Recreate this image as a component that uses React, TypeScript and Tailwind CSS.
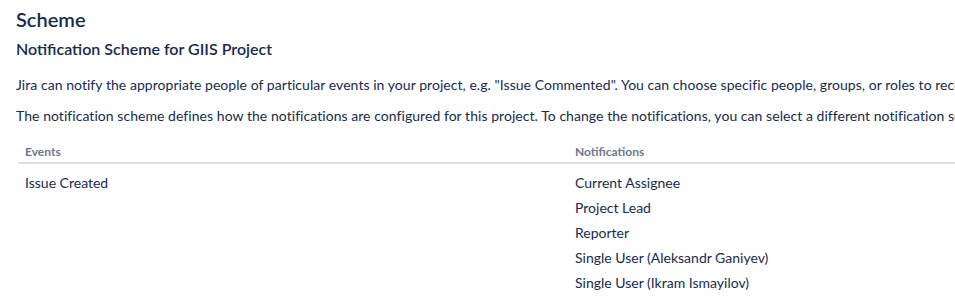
import React from 'react';

const notifications = [
  'Current Assignee',
  'Project Lead',
  'Reporter',
  'Single User (Aleksandr Ganiyev)',
  'Single User (Ikram Ismayilov)',
];

export default function App() {
  return (
    <div className="min-h-screen overflow-hidden bg-white pl-4 text-[14px] text-[#172B4D]" style={{ fontFamily: 'Lato, sans-serif' }}>
      <h1 className="pt-[6px] text-[20px] font-semibold leading-[26px]">Scheme</h1>
      <h2 className="mt-[7px] text-[16px] font-semibold leading-[20px]">Notification Scheme for GIIS Project</h2>
      <p className="mt-[16px] whitespace-nowrap leading-[20px] tracking-[0.05px]">
        Jira can notify the appropriate people of particular events in your project, e.g. "Issue Commented". You can choose specific people, groups, or roles to receive notifications.
      </p>
      <p className="mt-[11px] whitespace-nowrap leading-[20px] tracking-[0.05px]">
        The notification scheme defines how the notifications are configured for this project. To change the notifications, you can select a different notification scheme.
      </p>
      <table className="mt-[11px] ml-[2px] w-[1200px] border-collapse text-left">
        <thead>
          <tr className="border-b-2 border-[#DFE1E6]">
            <th className="w-[557px] px-[7px] pt-[5px] pb-0 text-[12px] font-bold leading-[20px] text-[#6B778C]">Events</th>
            <th className="px-0 pt-[5px] pb-0 text-[12px] font-bold leading-[20px] text-[#6B778C]">Notifications</th>
          </tr>
        </thead>
        <tbody>
          <tr className="align-top">
            <td className="px-[7px] pt-[9px] leading-[20px]">Issue Created</td>
            <td className="pt-[9px]">
              <ul className="flex flex-col gap-[5px]">
                {notifications.map((n) => (
                  <li key={n} className="leading-[20px]">{n}</li>
                ))}
              </ul>
            </td>
          </tr>
        </tbody>
      </table>
    </div>
  );
}
